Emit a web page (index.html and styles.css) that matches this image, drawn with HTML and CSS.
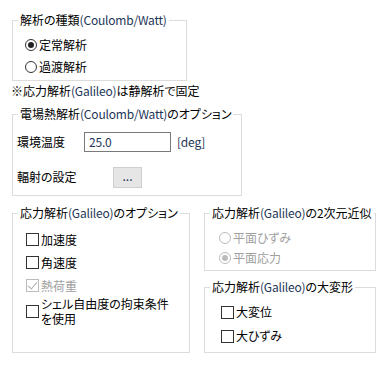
FILE: index.html
```html
<!DOCTYPE html>
<html>
  <head>
    <title>解析オプション</title>
    <link rel="stylesheet" href="styles.css">
  </head>
  <body>
    <div class="page">
      <fieldset class="group kind">
        <legend>解析の種類<span class="lat">(Coulomb/Watt)</span></legend>
        <div class="opt radio-row">
          <span class="radio checked"></span>定常解析
        </div>
        <div class="opt radio-row">
          <span class="radio"></span>過渡解析
        </div>
      </fieldset>

      <div class="note">※応力解析<span class="lat">(Galileo)</span>は静解析で固定</div>

      <fieldset class="group thermal">
        <legend>電場熱解析<span class="lat">(Coulomb/Watt)</span>のオプション</legend>
        <div class="field-row temp">
          <span class="label">環境温度</span>
          <span class="textbox lat">25.0</span>
          <span class="unit lat">[deg]</span>
        </div>
        <div class="field-row rad">
          <span class="label">輻射の設定</span>
          <span class="dots-btn">...</span>
        </div>
      </fieldset>

      <div class="columns">
        <fieldset class="group stress">
          <legend>応力解析<span class="lat">(Galileo)</span>のオプション</legend>
          <div class="opt check-row">
            <span class="check"></span>加速度
          </div>
          <div class="opt check-row">
            <span class="check"></span>角速度
          </div>
          <div class="opt check-row disabled">
            <span class="check checked"></span>熱荷重
          </div>
          <div class="opt check-row multi">
            <span class="check"></span>
            <span class="multi-text">シェル自由度の拘束条件<br>を使用</span>
          </div>
        </fieldset>

        <div class="right-col">
          <fieldset class="group plane">
            <legend>応力解析<span class="lat">(Galileo)</span>の2次元近似</legend>
            <div class="opt radio-row disabled">
              <span class="radio"></span>平面ひずみ
            </div>
            <div class="opt radio-row disabled">
              <span class="radio checked"></span>平面応力
            </div>
          </fieldset>

          <fieldset class="group large">
            <legend>応力解析<span class="lat">(Galileo)</span>の大変形</legend>
            <div class="opt check-row">
              <span class="check"></span>大変位
            </div>
            <div class="opt check-row">
              <span class="check"></span>大ひずみ
            </div>
          </fieldset>
        </div>
      </div>
    </div>
  </body>
</html>
```

FILE: styles.css
```css
* {
  margin: 0;
  padding: 0;
  box-sizing: border-box;
}

body {
  font-family: "Noto Sans CJK JP", "Noto Sans", sans-serif;
  font-size: 12px;
  line-height: 14px;
  color: #000;
  background: #fff;
  width: 390px;
  height: 366px;
  overflow: hidden;
  font-feature-settings: "palt";
}

.page {
  padding: 13px 0 0 12px;
}

.lat {
  color: #1d3658;
  letter-spacing: -0.2px;
}

/* group boxes */
.group {
  border: 1px solid #dcdcdc;
  min-width: 0;
}

.group legend {
  margin-left: 5px;
  padding: 0 2px;
  line-height: 14px;
  white-space: nowrap;
}

.kind {
  width: 175px;
  padding: 7px 0 2px 0;
}

.kind .opt {
  margin-left: 12px;
}

.note {
  margin: 3px 0 0 -1px;
  height: 14px;
  white-space: nowrap;
}

.thermal {
  width: 230px;
  margin-top: 9px;
  padding: 10px 0 7px 0;
}

.columns {
  display: flex;
  gap: 14px;
  margin-top: 10px;
}

.stress {
  width: 178px;
  height: 147px;
  padding: 8px 0 0 0;
}

.stress .opt {
  margin-left: 13px;
}

.right-col {
  display: flex;
  flex-direction: column;
  gap: 9px;
}

.plane {
  width: 172px;
  padding: 8px 0 2px 0;
}

.plane .opt {
  margin-left: 14px;
}

.large {
  width: 172px;
  height: 73px;
  padding: 6px 0 0 0;
}

.large .opt {
  margin-left: 16px;
}

/* options */
.opt {
  display: flex;
  align-items: center;
  gap: 2px;
  white-space: nowrap;
}

.radio-row {
  height: 22px;
}

.plane .radio-row {
  height: 20px;
}

.check-row {
  height: 23px;
}

.large .check-row {
  height: 24px;
}

.check-row.multi {
  height: 30px;
  margin-top: -1px;
}

.multi-text {
  line-height: 15px;
}

.disabled {
  color: #a0a0a0;
}

.radio {
  width: 12px;
  height: 12px;
  border: 1px solid #333;
  border-radius: 50%;
  display: inline-flex;
  align-items: center;
  justify-content: center;
  flex: none;
}

.radio.checked::after {
  content: "";
  width: 6px;
  height: 6px;
  border-radius: 50%;
  background: #222;
}

.disabled .radio {
  border-color: #bcbcbc;
}

.disabled .radio.checked::after {
  background: #bcbcbc;
}

.check {
  width: 13px;
  height: 13px;
  border: 1px solid #333;
  flex: none;
  position: relative;
}

.disabled .check {
  border-color: #bcbcbc;
}

.check.checked::after {
  content: "";
  position: absolute;
  left: 3px;
  top: 0;
  width: 4px;
  height: 8px;
  border: solid #b0b0b0;
  border-width: 0 1px 1px 0;
  transform: rotate(40deg);
}

/* thermal rows */
.field-row {
  display: flex;
  align-items: center;
  margin-left: 4px;
}

.temp {
  height: 21px;
}

.rad {
  height: 22px;
  margin-top: 14px;
}

.label {
  width: 67px;
}

.rad .label {
  width: 96px;
}

.textbox {
  width: 87px;
  height: 20px;
  border: 1px solid #7a7a7a;
  padding: 2px 0 0 4px;
  line-height: 14px;
}

.unit {
  margin-left: 6px;
}

.dots-btn {
  width: 29px;
  height: 21px;
  border: 1px solid #cfcfcf;
  background: #e6e6e6;
  display: flex;
  align-items: center;
  justify-content: center;
  color: #1d3658;
  padding-bottom: 3px;
}
```
